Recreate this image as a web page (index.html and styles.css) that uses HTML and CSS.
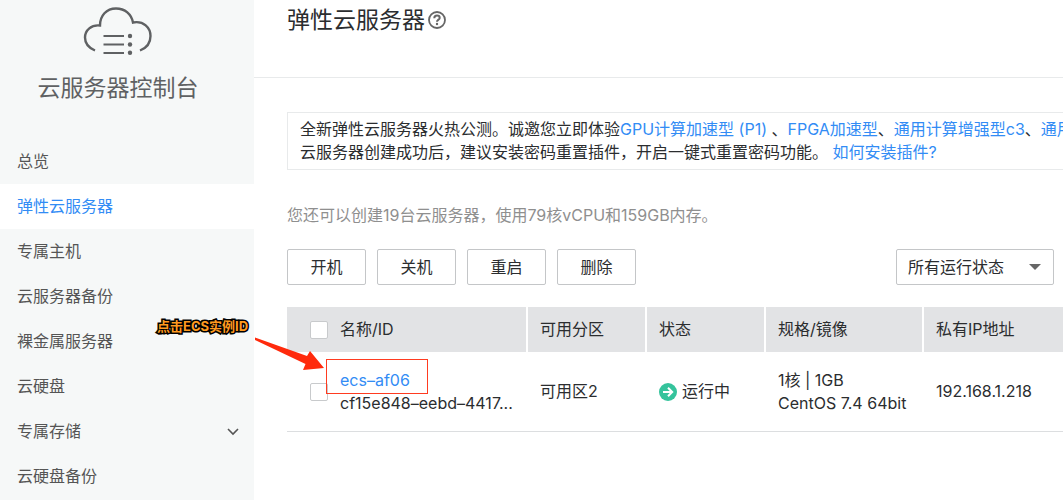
FILE: index.html
```html
<!DOCTYPE html>
<html lang="zh-CN">
  <head>
    <meta charset="UTF-8" />
    <meta name="viewport" content="width=device-width, initial-scale=1.0" />
    <title>弹性云服务器</title>
    <link rel="stylesheet" href="styles.css">
  </head>
  <body>
    <div class="page">
      <aside class="sidebar">
        <div class="logo">
          <svg width="70" height="48" viewBox="0 0 70 48" fill="none" stroke="#5f6163" stroke-width="2.4">
            <path d="M12 43.500C6 41 2 36.500 2 30.500C2 23 8.500 17.500 17 18.500C17 8.500 23.500 1.500 33 1.500C42 1.500 48.500 7 50 15.500C60.500 13.500 67.500 20.500 67.500 29C67.500 35.500 63.500 41 57 43.500" />
            <path stroke-width="2" d="M20.500 29h20.500M20.500 37.500h20.500M20.500 46h20.500" />
            <g fill="#5f6163" stroke="none">
              <circle cx="47" cy="29" r="2.200" />
              <circle cx="47" cy="37.500" r="2.200" />
              <circle cx="47" cy="45.800" r="2.200" />
            </g>
          </svg>
          <h2>云服务器控制台</h2>
        </div>
        <ul class="menu">
          <li><a href="#">总览</a></li>
          <li class="current"><a href="#">弹性云服务器</a></li>
          <li><a href="#">专属主机</a></li>
          <li><a href="#">云服务器备份</a></li>
          <li><a href="#">裸金属服务器</a></li>
          <li><a href="#">云硬盘</a></li>
          <li>
            <a href="#">专属存储
              <svg width="12" height="8" viewBox="0 0 12 8" fill="none" stroke="#555" stroke-width="1.6"><path d="M1 1l5 5 5-5" /></svg>
            </a>
          </li>
          <li><a href="#">云硬盘备份</a></li>
        </ul>
      </aside>

      <main class="main">
        <div class="header">
          <h1>弹性云服务器</h1>
          <svg width="18" height="18" viewBox="0 0 18 18" fill="none" stroke="#666" stroke-width="1.8">
            <circle cx="9" cy="9" r="8" />
            <path stroke-width="2" d="M6.300 7.200C6.300 5.500 7.500 4.600 9 4.600C10.600 4.600 11.700 5.500 11.700 6.900C11.700 8.600 9 8.700 9 10.800" />
            <circle cx="9" cy="13" r="1.200" fill="#666" stroke="none" />
          </svg>
        </div>

        <div class="content">
          <div class="notice">
            <p>全新弹性云服务器火热公测。诚邀您立即体验<a href="#">GPU计算加速型 (P1)</a> 、<a href="#">FPGA加速型</a>、<a href="#">通用计算增强型c3</a>、<a href="#">通用计算型</a></p>
            <p>云服务器创建成功后，建议安装密码重置插件，开启一键式重置密码功能。 <a href="#">如何安装插件?</a></p>
          </div>
          <p class="quota">您还可以创建19台云服务器，使用79核vCPU和159GB内存。</p>

          <div class="toolbar">
            <button type="button">开机</button>
            <button type="button">关机</button>
            <button type="button">重启</button>
            <button type="button">删除</button>
            <select class="status" aria-label="运行状态">
              <option>所有运行状态</option>
            </select>
          </div>

          <table class="list">
            <thead>
              <tr>
                <th class="check"><input type="checkbox" aria-label="全选"></th>
                <th class="name">名称/ID</th>
                <th class="zone">可用分区</th>
                <th class="state">状态</th>
                <th class="spec">规格/镜像</th>
                <th class="ip">私有IP地址</th>
              </tr>
            </thead>
            <tbody>
              <tr>
                <td class="check"><input type="checkbox" aria-label="ecs-af06"></td>
                <td class="name"><a href="#">ecs–af06</a><br>cf15e848–eebd–4417...</td>
                <td>可用区2</td>
                <td>
                  <span class="running">
                    <svg width="18" height="18" viewBox="0 0 18 18" fill="none" stroke="#fff" stroke-width="2">
                      <circle cx="9" cy="9" r="9" fill="#35c39c" stroke="none" />
                      <path d="M4 9h9M9 4.800l4.200 4.200L9 13.200" />
                    </svg>
                    运行中
                  </span>
                </td>
                <td>1核 | 1GB<br>CentOS 7.4 64bit</td>
                <td>192.168.1.218</td>
              </tr>
            </tbody>
          </table>
        </div>
      </main>

      <!-- 操作提示 -->
      <span class="tip">点击ECS实例ID</span>
      <svg class="arrow" width="72" height="36" viewBox="0 0 72 36">
        <path fill="#ff2a0c" d="M1 1.500L53 20L56 15L70 32L49 34L51.500 28L1 4Z" />
      </svg>
      <div class="frame"></div>
    </div>
  </body>
</html>
```

FILE: styles.css
```css
* {
  padding: 0;
  margin: 0;
  box-sizing: border-box;
}
body {
  font: 16px/23px Inter, "Noto Sans CJK SC", sans-serif;
  color: #2b2d2f;
  background-color: #fff;
}
a {
  color: #328cf5;
  text-decoration: none;
}
li {
  list-style: none;
}
.page {
  position: relative;
  display: flex;
  height: 100vh;
  overflow: hidden;
}

/* 左侧菜单 */
.sidebar {
  flex: none;
  width: 254px;
  background-color: #f6f8f8;
}
.logo {
  display: flex;
  flex-direction: column;
  align-items: center;
  height: 139px;
  padding: 7px 18px 0 0;
}
.logo svg {
  flex: none;
}
.logo h2 {
  margin-top: 17px;
  font-size: 23px;
  font-weight: 400;
  line-height: 32px;
  color: #5f6163;
}
.menu a {
  display: flex;
  align-items: center;
  justify-content: space-between;
  height: 45px;
  padding: 0 15px 0 17px;
  color: #555;
}
.menu .current {
  background-color: #fff;
}
.menu .current a {
  color: #328cf5;
}

/* 右侧内容 */
.main {
  flex: 1;
  min-width: 0;
}
.header {
  display: flex;
  gap: 3px;
  align-items: center;
  height: 78px;
  padding: 0 33px 37px;
  border-bottom: 1px solid #e8eaeb;
}
.header h1 {
  font-size: 23px;
  font-weight: 400;
  line-height: 32px;
}
.content {
  padding: 34px 0 0 33px;
}
.notice {
  padding: 5px 12px;
  border: 1px solid #e8eaeb;
  border-right: 0;
  white-space: nowrap;
  overflow: hidden;
}
.quota {
  margin: 34px 0 22px;
  color: #8f8f8f;
}
.toolbar {
  display: flex;
  gap: 11px;
  padding-right: 9px;
}
.toolbar button,
.status {
  height: 36px;
  border: 1px solid #c4c6c8;
  border-radius: 2px;
  font: inherit;
  color: #2b2d2f;
  background-color: #fff;
}
.toolbar button {
  width: 79px;
}
.status {
  width: 158px;
  margin-left: auto;
  padding: 0 11px;
  appearance: none;
  background: #fff url("data:image/svg+xml,%3Csvg xmlns='http://www.w3.org/2000/svg' width='12' height='6'%3E%3Cpath fill='%23666' d='M0 0h12L6 6z'/%3E%3C/svg%3E") no-repeat right 12px center;
}

/* 列表 */
.list {
  width: 100%;
  margin-top: 22px;
  border-collapse: separate;
  border-spacing: 0;
  table-layout: fixed;
  text-align: left;
  white-space: nowrap;
}
.list th {
  height: 45px;
  padding-left: 12px;
  border-left: 2px solid #fff;
  font-weight: 400;
  background-color: #e2e3e5;
}
.list td {
  height: 80px;
  padding-left: 14px;
  border-bottom: 1px solid #dcdee0;
}
.list .check {
  width: 53px;
  padding-left: 23px;
  border-left: 0;
}
.list .name {
  width: 186px;
  padding-left: 0;
  border-left: 0;
}
.zone,
.state {
  width: 119px;
}
.spec {
  width: 158px;
}
.list input {
  display: block;
  width: 18px;
  height: 18px;
  appearance: none;
  border: 1px solid #c8cacc;
  border-radius: 2px;
  background-color: #fff;
}
.running {
  display: flex;
  gap: 5px;
  align-items: center;
}

/* 标注 */
.tip {
  position: absolute;
  top: 315px;
  left: 157px;
  font-size: 13px;
  font-weight: 700;
  color: #ff9a1f;
  -webkit-text-stroke: 3px #000;
  paint-order: stroke fill;
}
.arrow {
  position: absolute;
  top: 336px;
  left: 254px;
}
.frame {
  position: absolute;
  top: 359px;
  left: 326px;
  width: 102px;
  height: 35px;
  border: 1px solid #ff3b20;
}
```
